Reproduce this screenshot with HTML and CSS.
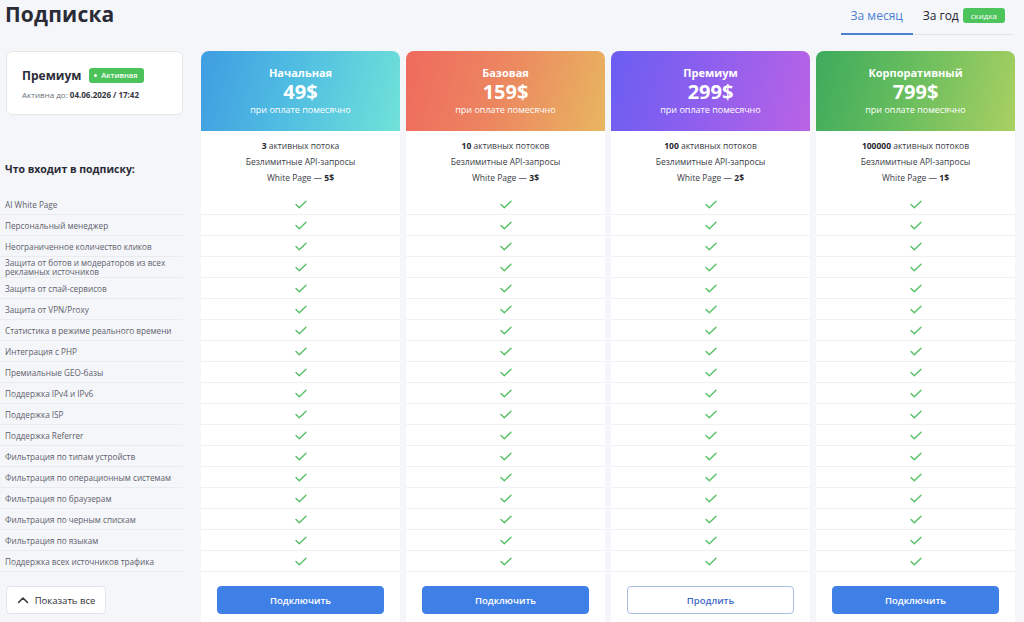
FILE: index.html
```html
<!DOCTYPE html>
<html lang="ru">
<head>
<meta charset="utf-8">
<title>Подписка</title>
<link rel="stylesheet" href="styles.css">
</head>
<body>
<div class="page">
  <header class="topbar">
    <h1 class="title">Подписка</h1>
    <nav class="tabs">
      <div class="tab tab-active">За месяц</div>
      <div class="tab">За год <span class="sale">скидка</span></div>
    </nav>
  </header>

  <main class="pricing">
    <aside class="features">
      <div class="current">
        <div class="current-row">
          <span class="current-name">Премиум</span>
          <span class="status"><span class="status-dot"></span>Активная</span>
        </div>
        <div class="current-until">Активна до: <b>04.06.2026 / 17:42</b></div>
      </div>
      <h2 class="feat-title">Что входит в подписку:</h2>
      <ul class="feat-list">
        <li>AI White Page</li>
        <li>Персональный менеджер</li>
        <li>Неограниченное количество кликов</li>
        <li>Защита от ботов и модераторов из всех рекламных источников</li>
        <li>Защита от спай-сервисов</li>
        <li>Защита от VPN/Proxy</li>
        <li>Статистика в режиме реального времени</li>
        <li>Интеграция с PHP</li>
        <li>Премиальные GEO-базы</li>
        <li>Поддержка IPv4 и IPv6</li>
        <li>Поддержка ISP</li>
        <li>Поддержка Referrer</li>
        <li>Фильтрация по типам устройств</li>
        <li>Фильтрация по операционным системам</li>
        <li>Фильтрация по браузерам</li>
        <li>Фильтрация по черным спискам</li>
        <li>Фильтрация по языкам</li>
        <li>Поддержка всех источников трафика</li>
      </ul>
      <div class="feat-foot">
        <button class="show-all">
          <svg class="chev" viewBox="0 0 12 8" width="12" height="8"><path d="M1.5 6.5 L6 2 L10.5 6.5" fill="none" stroke="#3a3a46" stroke-width="1.6" stroke-linecap="round" stroke-linejoin="round"/></svg>
          Показать все
        </button>
      </div>
    </aside>

    <div class="plans">
      <section class="plan">
        <div class="plan-head head-start">
          <div class="plan-name">Начальная</div>
          <div class="plan-price">49$</div>
          <div class="plan-sub">при оплате помесячно</div>
        </div>
        <div class="plan-info">
          <div><b>3</b> активных потока</div>
          <div>Безлимитные API-запросы</div>
          <div>White Page — <b>5$</b></div>
        </div>
        <ul class="checks">
          <li></li><li></li><li></li><li></li><li></li><li></li><li></li><li></li><li></li>
          <li></li><li></li><li></li><li></li><li></li><li></li><li></li><li></li><li></li>
        </ul>
        <div class="plan-foot"><button class="btn btn-primary">Подключить</button></div>
      </section>

      <section class="plan">
        <div class="plan-head head-base">
          <div class="plan-name">Базовая</div>
          <div class="plan-price">159$</div>
          <div class="plan-sub">при оплате помесячно</div>
        </div>
        <div class="plan-info">
          <div><b>10</b> активных потоков</div>
          <div>Безлимитные API-запросы</div>
          <div>White Page — <b>3$</b></div>
        </div>
        <ul class="checks">
          <li></li><li></li><li></li><li></li><li></li><li></li><li></li><li></li><li></li>
          <li></li><li></li><li></li><li></li><li></li><li></li><li></li><li></li><li></li>
        </ul>
        <div class="plan-foot"><button class="btn btn-primary">Подключить</button></div>
      </section>

      <section class="plan">
        <div class="plan-head head-premium">
          <div class="plan-name">Премиум</div>
          <div class="plan-price">299$</div>
          <div class="plan-sub">при оплате помесячно</div>
        </div>
        <div class="plan-info">
          <div><b>100</b> активных потоков</div>
          <div>Безлимитные API-запросы</div>
          <div>White Page — <b>2$</b></div>
        </div>
        <ul class="checks">
          <li></li><li></li><li></li><li></li><li></li><li></li><li></li><li></li><li></li>
          <li></li><li></li><li></li><li></li><li></li><li></li><li></li><li></li><li></li>
        </ul>
        <div class="plan-foot"><button class="btn btn-outline">Продлить</button></div>
      </section>

      <section class="plan">
        <div class="plan-head head-corp">
          <div class="plan-name">Корпоративный</div>
          <div class="plan-price">799$</div>
          <div class="plan-sub">при оплате помесячно</div>
        </div>
        <div class="plan-info">
          <div><b>100000</b> активных потоков</div>
          <div>Безлимитные API-запросы</div>
          <div>White Page — <b>1$</b></div>
        </div>
        <ul class="checks">
          <li></li><li></li><li></li><li></li><li></li><li></li><li></li><li></li><li></li>
          <li></li><li></li><li></li><li></li><li></li><li></li><li></li><li></li><li></li>
        </ul>
        <div class="plan-foot"><button class="btn btn-primary">Подключить</button></div>
      </section>
    </div>
  </main>
</div>
</body>
</html>
```

FILE: styles.css
```css
* { box-sizing: border-box; }

html, body {
  margin: 0;
  padding: 0;
  background: #f5f6fa;
  font-family: "Open Sans", "Liberation Sans", sans-serif;
  color: #2b2c38;
  overflow: hidden;
}

.page {
  width: 1024px;
  height: 622px;
  overflow: hidden;
}

/* top bar */
.topbar {
  height: 51px;
  display: flex;
  justify-content: space-between;
  align-items: flex-start;
  padding: 0 11px 0 5px;
}

.title {
  margin: 0;
  font-size: 21px;
  line-height: 28px;
  font-weight: 700;
  color: #2a2b36;
  letter-spacing: 0.2px;
}

.tabs {
  display: flex;
  border-bottom: 1px solid #e2e4ea;
}

.tab {
  display: flex;
  align-items: center;
  height: 35px;
  padding: 0 8px 4px 10px;
  font-size: 12px;
  color: #24252f;
  margin-bottom: -1px;
}

.tab-active {
  color: #4d7fd2;
  border-bottom: 2px solid #4d7fd2;
  padding: 0 0 2px 0;
  justify-content: center;
  width: 72px;
}

.sale {
  display: inline-block;
  margin-left: 4px;
  background: #4dc35c;
  color: #fff;
  font-size: 8px;
  line-height: 15px;
  padding: 0 8px;
  border-radius: 3px;
}

/* main */
.pricing {
  display: flex;
  align-items: flex-start;
}

.features {
  width: 183px;
  margin-right: 18px;
  flex: none;
}

.current {
  margin-left: 6px;
  width: 177px;
  height: 64px;
  background: #fff;
  border: 1px solid #e3e8e4;
  border-radius: 6px;
  padding: 15px 15px 0 15px;
}

.current-row {
  display: flex;
  align-items: center;
  height: 16px;
}

.current-name {
  font-size: 12px;
  font-weight: 700;
  color: #2b2c38;
}

.status {
  display: inline-flex;
  align-items: center;
  margin-left: 8px;
  background: #4cc25a;
  color: #fff;
  font-size: 7.5px;
  font-weight: 600;
  height: 15px;
  padding: 0 6px 0 5px;
  border-radius: 3px;
}

.status-dot {
  width: 3px;
  height: 3px;
  border-radius: 50%;
  background: #fff;
  margin-right: 4px;
}

.current-until {
  margin-top: 6px;
  font-size: 8px;
  line-height: 12px;
  color: #6c6f7a;
  white-space: nowrap;
}

.current-until b {
  color: #34353f;
  font-weight: 700;
}

.feat-title {
  margin: 0;
  height: 79px;
  padding: 47px 0 0 5px;
  font-size: 10.5px;
  line-height: 14px;
  font-weight: 700;
  color: #2a2b36;
}

.feat-list {
  list-style: none;
  margin: 0;
  padding: 0;
}

.feat-list li {
  height: 21px;
  display: flex;
  align-items: center;
  padding-left: 5px;
  padding-right: 4px;
  font-size: 8.2px;
  line-height: 9px;
  color: #5e616c;
  border-bottom: 1px solid #e9ebef;
}

.feat-foot {
  padding: 14px 0 0 6px;
}

.show-all {
  width: 100px;
  height: 28px;
  background: #fff;
  border: 1px solid #e1e3e8;
  border-radius: 4px;
  display: flex;
  align-items: center;
  justify-content: center;
  gap: 6px;
  font-family: inherit;
  font-size: 9.5px;
  color: #2f3039;
  padding: 0;
}

.chev { display: block; }

/* plans */
.plans {
  display: flex;
  gap: 6px;
}

.plan {
  width: 199px;
  background: #fff;
  border-radius: 8px 8px 0 0;
  height: 580px;
}

.plan-head {
  height: 80px;
  border-radius: 8px 8px 0 0;
  padding-top: 15px;
  text-align: center;
  color: #fff;
}

.head-start { background: linear-gradient(105deg, #3f9de1 0%, #50bde2 45%, #70e2d8 100%); }
.head-base { background: linear-gradient(105deg, #ef6a5d 0%, #ec8560 45%, #e8b660 100%); }
.head-premium { background: linear-gradient(105deg, #6a5ef1 0%, #8d5fee 45%, #b963e5 100%); }
.head-corp { background: linear-gradient(105deg, #3dab5c 0%, #67bd5e 45%, #a9d062 100%); }

.plan-name {
  font-size: 11px;
  line-height: 14px;
  font-weight: 700;
}

.plan-price {
  font-size: 20px;
  line-height: 24px;
  font-weight: 700;
}

.plan-sub {
  font-size: 9px;
  line-height: 12px;
}

.plan-info {
  height: 63px;
  padding-top: 7px;
  text-align: center;
  font-size: 8.5px;
  line-height: 16px;
  color: #3a3b45;
}

.plan-info b { font-weight: 700; color: #26272f; }

.checks {
  list-style: none;
  margin: 0;
  padding: 0;
}

.checks li {
  height: 21px;
  border-bottom: 1px solid #f0f1f4;
  background: no-repeat center / 12px 9px url("data:image/svg+xml;utf8,<svg xmlns='http://www.w3.org/2000/svg' viewBox='0 0 12 9'><path d='M1 4.6 L4.3 7.8 L11 1.2' fill='none' stroke='%2356c066' stroke-width='1.4' stroke-linecap='round' stroke-linejoin='round'/></svg>");
}

.plan-foot {
  padding: 14px 16px 0;
}

.btn {
  display: block;
  width: 167px;
  height: 28px;
  border-radius: 4px;
  font-family: inherit;
  font-size: 9.5px;
  font-weight: 600;
  cursor: pointer;
}

.btn-primary {
  background: #3f80e7;
  border: 1px solid #3f80e7;
  color: #fff;
}

.btn-outline {
  background: #fff;
  border: 1px solid #a9bfe2;
  color: #3f6cc9;
}
```
